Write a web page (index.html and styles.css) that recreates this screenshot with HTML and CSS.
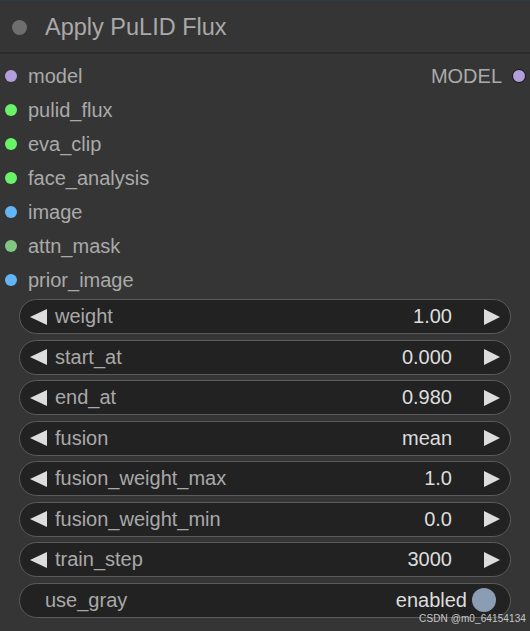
FILE: index.html
```html
<!DOCTYPE html>
<html>
<head>
<meta charset="utf-8">
<link rel="stylesheet" href="styles.css">
</head>
<body>
<div class="node">
  <div class="header">
    <span class="hdot"></span>
    <span class="title">Apply PuLID Flux</span>
  </div>
  <div class="body">
    <div class="slots">
      <div class="row">
        <div class="in"><span class="dot c-model"></span>model</div>
        <div class="out">MODEL<span class="dot odot c-model"></span></div>
      </div>
      <div class="row"><div class="in"><span class="dot c-green"></span>pulid_flux</div></div>
      <div class="row"><div class="in"><span class="dot c-green"></span>eva_clip</div></div>
      <div class="row"><div class="in"><span class="dot c-green"></span>face_analysis</div></div>
      <div class="row"><div class="in"><span class="dot c-image"></span>image</div></div>
      <div class="row"><div class="in"><span class="dot c-mask"></span>attn_mask</div></div>
      <div class="row"><div class="in"><span class="dot c-image"></span>prior_image</div></div>
    </div>
    <div class="widgets">
      <div class="w"><span class="la"></span><span class="lbl">weight</span><span class="val">1.00</span><span class="ra"></span></div>
      <div class="w"><span class="la"></span><span class="lbl">start_at</span><span class="val">0.000</span><span class="ra"></span></div>
      <div class="w"><span class="la"></span><span class="lbl">end_at</span><span class="val">0.980</span><span class="ra"></span></div>
      <div class="w"><span class="la"></span><span class="lbl">fusion</span><span class="val">mean</span><span class="ra"></span></div>
      <div class="w"><span class="la"></span><span class="lbl">fusion_weight_max</span><span class="val">1.0</span><span class="ra"></span></div>
      <div class="w"><span class="la"></span><span class="lbl">fusion_weight_min</span><span class="val">0.0</span><span class="ra"></span></div>
      <div class="w"><span class="la"></span><span class="lbl">train_step</span><span class="val">3000</span><span class="ra"></span></div>
      <div class="w toggle"><span class="lbl">use_gray</span><span class="val">enabled</span><span class="knob"></span></div>
    </div>
  </div>
  <div class="mark">CSDN @m0_64154134</div>
</div>
</body>
</html>
```
FILE: styles.css
```css
html, body {
  margin: 0;
  padding: 0;
  background: #353535;
}
body {
  width: 530px;
  height: 631px;
  overflow: hidden;
  font-family: "Liberation Sans", Arial, sans-serif;
}
.node {
  position: relative;
  height: 631px;
  border-top: 1px solid #2c3b45;
  box-sizing: border-box;
}
.header {
  height: 51px;
  display: flex;
  align-items: center;
  background: #353535;
  border-bottom: 2px solid #2b2b2b;
}
.hdot {
  width: 15px;
  height: 15px;
  border-radius: 50%;
  background: #6e6e6e;
  margin-left: 12px;
  margin-right: 18px;
  margin-top: 1px;
}
.title {
  color: #a9a9a9;
  font-size: 23.5px;
  margin-top: 1px;
}
.body {
  padding-top: 5px;
}
.row {
  height: 34px;
  display: flex;
  align-items: center;
  justify-content: space-between;
  font-size: 20px;
  color: #aaaaaa;
}
.in {
  display: flex;
  align-items: center;
}
.out {
  display: flex;
  align-items: center;
}
.dot {
  width: 12px;
  height: 12px;
  border-radius: 50%;
  margin-left: 5px;
  margin-right: 11px;
  box-sizing: border-box;
}
.odot {
  margin-left: 10px;
  margin-right: 4px;
  width: 14px;
  height: 14px;
  border: 1.5px solid #111;
}
.c-model { background: #b39ddb; }
.c-green { background: #6af36a; }
.c-image { background: #64b5f6; }
.c-mask { background: #81c784; }
.widgets {
  display: flex;
  flex-direction: column;
  gap: 5.5px;
  padding: 2px 19px 0 19px;
}
.w {
  height: 35px;
  box-sizing: border-box;
  border: 1.5px solid #5b5b5b;
  border-radius: 18px;
  background: #222222;
  display: flex;
  align-items: center;
  font-size: 20px;
}
.la {
  width: 0;
  height: 0;
  border-top: 8px solid transparent;
  border-bottom: 8px solid transparent;
  border-right: 17px solid #dddddd;
  margin-left: 10px;
  margin-right: 8px;
}
.ra {
  width: 0;
  height: 0;
  border-top: 8px solid transparent;
  border-bottom: 8px solid transparent;
  border-left: 16px solid #dddddd;
  margin-left: 32px;
  margin-right: 10px;
}
.lbl {
  color: #a9a9a9;
  flex: 1;
}
.val {
  color: #dddddd;
}
.toggle .lbl {
  margin-left: 25px;
}
.knob {
  width: 24px;
  height: 24px;
  border-radius: 50%;
  background: #8a9db2;
  margin-left: 5px;
  margin-right: 14px;
}
.mark {
  position: absolute;
  right: 4px;
  bottom: 7px;
  font-size: 10px;
  color: #c8c8c8;
  letter-spacing: 0.1px;
}
```
